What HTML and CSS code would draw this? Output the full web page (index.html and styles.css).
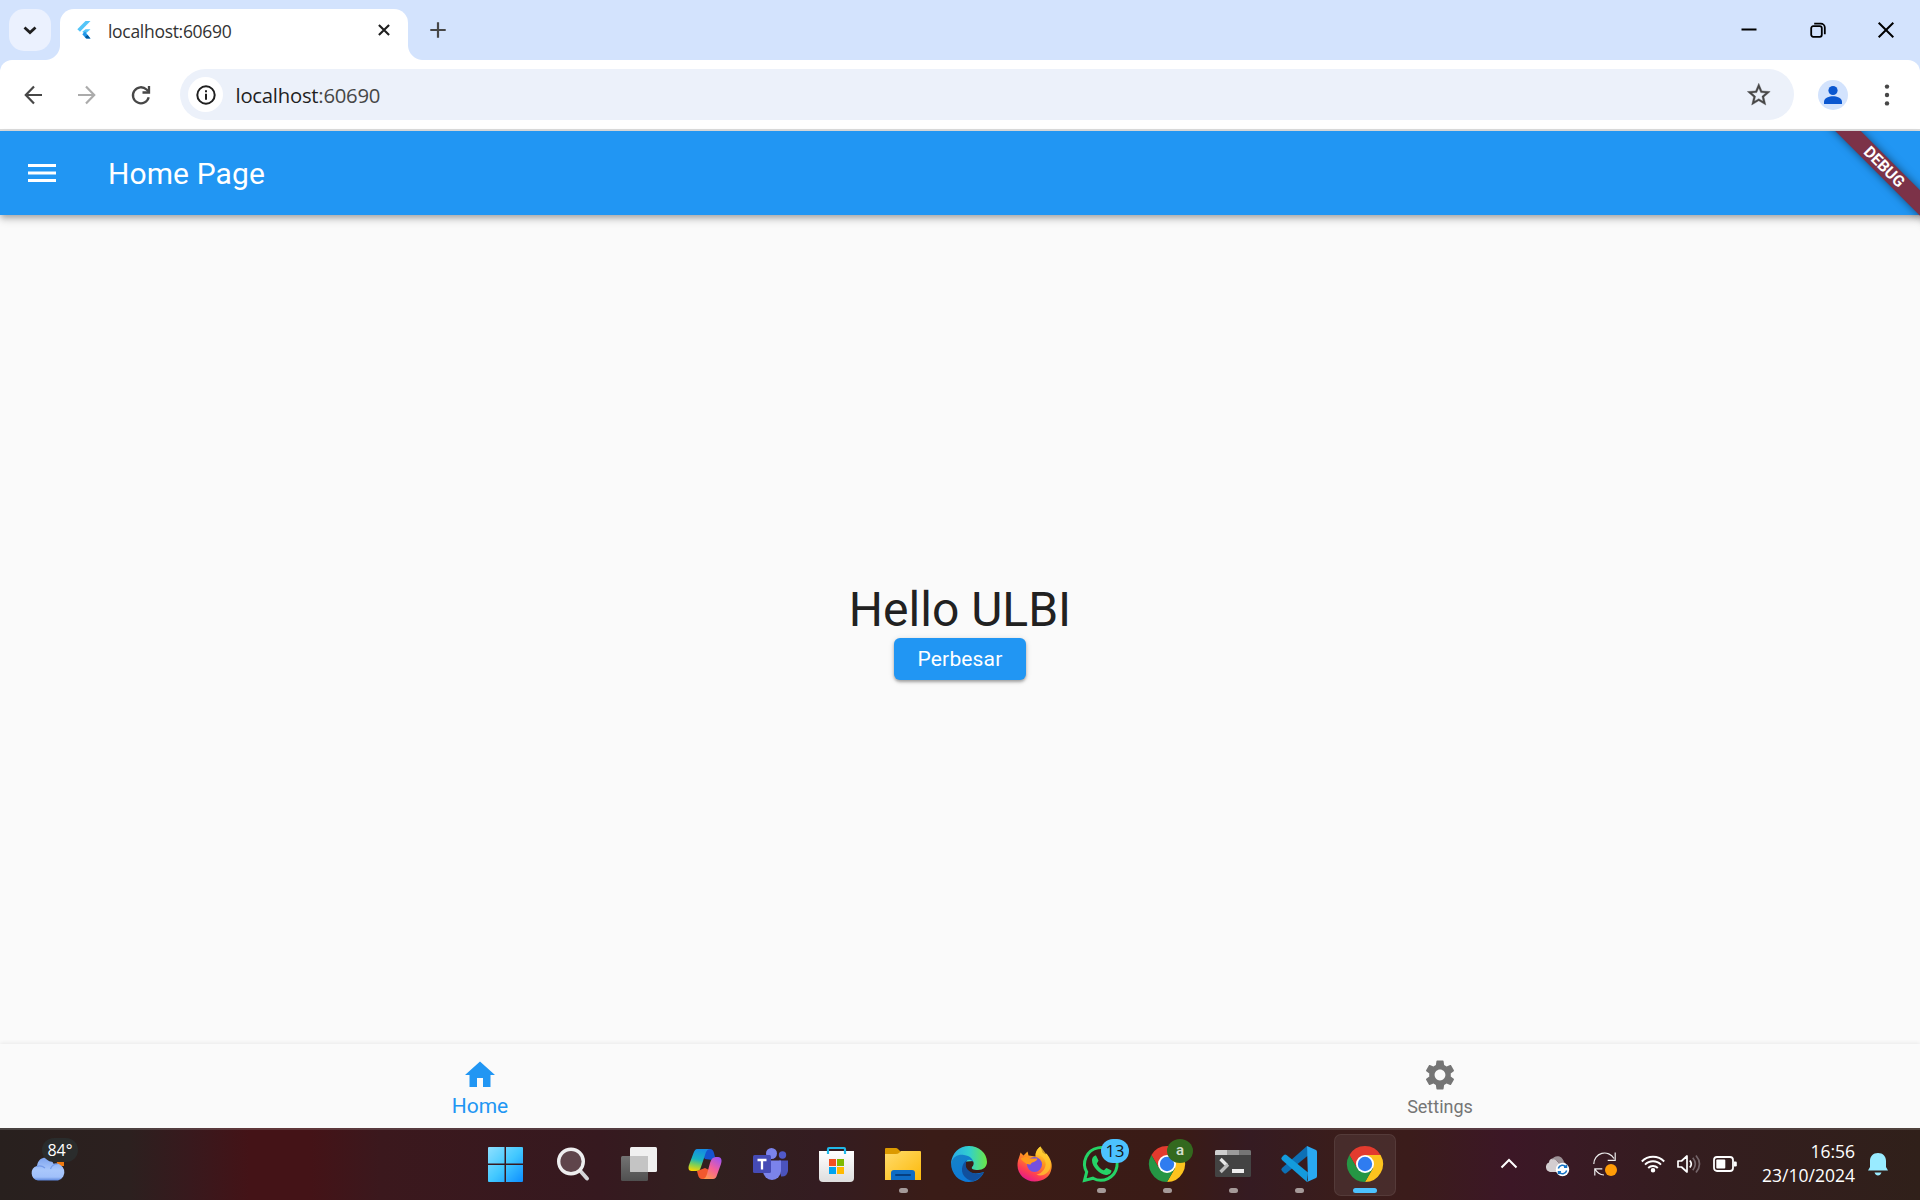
FILE: index.html
```html
<!DOCTYPE html>
<html lang="id">
<head>
<meta charset="utf-8">
<title>localhost:60690</title>
<link rel="stylesheet" href="styles.css">
</head>
<body>
<header class="tabstrip">
  <button class="tab-search"><svg width="42" height="42" viewBox="0 0 42 42"><path d="M15.5 18.5l5.5 5 5.5-5" fill="none" stroke="#1f1f1f" stroke-width="2.8"/></svg></button>
  <div class="tab">
    <svg class="favicon" width="14" height="18" viewBox="0 0 14 18"><path d="M8.5 0H13.5L3 10.8.3 8.2z" fill="#54c5f8"/><path d="M8.5 8.2h5L8 13.3 5.3 10.7z" fill="#54c5f8"/><path d="M5.3 13.3L8 10.6l5.500 7h-4.5z" fill="#2196e8"/><path d="M8 15.9l2.5-1.8 3 3.5H9.5z" fill="#01579b"/></svg>
    <span class="tab-title">localhost:60690</span>
    <svg class="tab-close" width="12" height="12" viewBox="0 0 12 12"><path d="M.9.9l10.2 10.2M11.1.9L.9 11.1" stroke="#1f1f1f" stroke-width="2.1"/></svg>
  </div>
  <svg class="new-tab" width="16" height="16" viewBox="0 0 16 16"><path d="M8 .3v15.4M.3 8h15.4" stroke="#474747" stroke-width="2.2"/></svg>
  <div class="window-controls">
    <svg width="16" height="16" viewBox="0 0 16 16"><path d="M.5 7.500h15" stroke="#000" stroke-width="2"/></svg>
    <svg width="16" height="16" viewBox="0 0 16 16" fill="none" stroke="#000" stroke-width="1.800"><rect x="1.200" y="4.200" width="10.600" height="10.600" rx="2"/><path d="M4.200 1.600h6.600a4 4 0 0 1 4 4v6.600"/></svg>
    <svg width="16" height="16" viewBox="0 0 16 16"><path d="M.7.7l14.6 14.6M15.3.7L.7 15.3" stroke="#000" stroke-width="2"/></svg>
  </div>
</header>
<nav class="toolbar">
  <svg width="54" height="54" viewBox="0 0 54 54" fill="none" stroke="#474747" stroke-width="2.2"><path d="M42 27H26M34 18.6L25.8 27l8.2 8.4"/></svg>
  <svg width="54" height="54" viewBox="0 0 54 54" fill="none" stroke="#ababab" stroke-width="2.2"><path d="M24 27h16M32 18.6L40.2 27 32 35.4"/></svg>
  <svg width="54" height="54" viewBox="0 0 54 54" fill="none" stroke="#474747" stroke-width="2.300"><path d="M40.700 29.200a8 8 0 1 1-2.200-7.700L40.600 23.500"/><path d="M41 18v6.500h-6.500"/></svg>
  <div class="omnibox">
    <span class="site-info"><svg width="20" height="20" viewBox="0 0 20 20"><circle cx="10" cy="10" r="8.700" fill="none" stroke="#1f1f1f" stroke-width="2"/><path d="M10 8.800v6M10 5.200v2" stroke="#1f1f1f" stroke-width="2"/></svg></span>
    <span class="url">localhost<span class="port">:60690</span></span>
    <svg class="star" width="27.500" height="27.500" viewBox="0 0 24 24"><path d="M22 9.24l-7.19-.62L12 2 9.19 8.63 2 9.24l5.46 4.73L5.82 21 12 17.27 18.18 21l-1.63-7.03L22 9.24zM12 15.4l-3.76 2.27 1-4.28-3.32-2.88 4.38-.38L12 6.1l1.71 4.04 4.38.38-3.32 2.88 1 4.28L12 15.4z" fill="#474747" stroke="#474747" stroke-width=".3"/></svg>
  </div>
  <svg class="avatar" width="30" height="30" viewBox="0 0 30 30"><circle cx="15" cy="15" r="15" fill="#d3e3fd"/><circle cx="15" cy="10.500" r="4.600" fill="#0b57d0"/><path d="M6 24v-2.400c0-3.600 5.400-5.400 9-5.400s9 1.800 9 5.400V24z" fill="#0b57d0"/></svg>
  <svg class="kebab" width="6" height="24" viewBox="0 0 6 24" fill="#474747"><circle cx="3" cy="3.600" r="2.200"/><circle cx="3" cy="12" r="2.200"/><circle cx="3" cy="20.400" r="2.200"/></svg>
</nav>
<div class="app">
  <header class="appbar">
    <svg class="menu" width="28" height="18" viewBox="0 0 28 18" fill="#fff"><path d="M0 0h28v3H0zM0 7.5h28v3H0zM0 15h28v3H0z"/></svg>
    <h1>Home Page</h1>
    <div class="debug-corner"><div class="debug-ribbon">DEBUG</div></div>
  </header>
  <main class="content">
    <p class="greeting">Hello ULBI</p>
    <button class="enlarge">Perbesar</button>
  </main>
  <nav class="bottom-nav">
    <a class="nav-item nav-active"><svg width="36" height="36" viewBox="0 0 24 24" fill="currentColor"><path d="M10 20v-6h4v6h5v-8h3L12 3 2 12h3v8z"/></svg><span>Home</span></a>
    <a class="nav-item"><svg width="36" height="36" viewBox="0 0 24 24" fill="currentColor"><path d="M19.14 12.94c.04-.3.06-.61.06-.94 0-.32-.02-.64-.07-.94l2.03-1.58c.18-.14.23-.41.12-.61l-1.92-3.32c-.12-.22-.37-.29-.59-.22l-2.39.96c-.5-.38-1.03-.7-1.62-.94l-.36-2.54c-.04-.24-.24-.41-.48-.41h-3.84c-.24 0-.43.17-.47.41l-.36 2.54c-.59.24-1.13.57-1.62.94l-2.39-.96c-.22-.08-.47 0-.59.22L2.74 8.87c-.12.21-.08.47.12.61l2.03 1.58c-.05.3-.09.63-.09.94s.02.64.07.94l-2.03 1.58c-.18.14-.23.41-.12.61l1.92 3.32c.12.22.37.29.59.22l2.39-.96c.5.38 1.03.7 1.62.94l.36 2.54c.05.24.24.41.48.41h3.84c.24 0 .44-.17.47-.41l.36-2.54c.59-.24 1.13-.56 1.62-.94l2.39.96c.22.08.47 0 .59-.22l1.92-3.32c.12-.22.07-.47-.12-.61l-2.01-1.58zM12 15.6c-1.98 0-3.6-1.62-3.6-3.6s1.62-3.6 3.6-3.6 3.6 1.62 3.6 3.6-1.62 3.6-3.6 3.6z"/></svg><span>Settings</span></a>
  </nav>
</div>
<footer class="taskbar">
  <div class="weather">
    <svg width="36" height="24" viewBox="0 0 36 24"><defs><linearGradient id="cloud" x2="0" y2="1"><stop offset="0" stop-color="#7ea4ee"/><stop offset=".55" stop-color="#a9c7fb"/><stop offset=".85" stop-color="#a0c0fa"/><stop offset="1" stop-color="#5b86dc"/></linearGradient></defs><path d="M26 3h8v6h-6z" fill="#f07a10"/><path d="M8 23.5a7.500 7.500 0 0 1-1-14.600C8 3 11.500 .8 15 .8c4 0 7 2.500 8.500 6A8.600 8.600 0 1 1 28 23.500z" fill="url(#cloud)"/><path d="M6.500 9.500c3-1 6-.5 8.500 1.500M20.500 12c1-3 3.500-5 7-5" fill="none" stroke="#749ae8" stroke-width="1.200"/></svg>
    <span class="temp">84°</span>
  </div>
  <div class="apps">
    <div class="app-cell"><svg viewBox="0 0 36 36"><defs><linearGradient id="win" x1="0" y1="0" x2="36" y2="36" gradientUnits="userSpaceOnUse"><stop offset="0" stop-color="#8fe0ff"/><stop offset=".5" stop-color="#42c8ff"/><stop offset="1" stop-color="#0a8bff"/></linearGradient></defs><path d="M0 1h15.500v16.500H-1V2q0-1 1-1zM17 1h16q1 0 1 1v15.500H17zM-1 19h16.500v17H0q-1 0-1-1zM17 19h17v16q0 1-1 1H17z" fill="url(#win)"/></svg></div>
    <div class="app-cell"><svg viewBox="0 0 36 36"><path d="M24.500 24l7.500 8.500" stroke="#d5d5d8" stroke-width="4" stroke-linecap="round"/><circle cx="16" cy="15.500" r="12.300" fill="#5f454b" stroke="#eeeeef" stroke-width="3.400"/></svg></div>
    <div class="app-cell"><svg viewBox="0 0 36 36"><defs><linearGradient id="tv" x2="0" y2="1"><stop offset="0" stop-color="#737373"/><stop offset="1" stop-color="#505050"/></linearGradient></defs><rect x="0" y="10" width="27" height="25" rx="1.500" fill="url(#tv)"/><rect x="9" y="1" width="27" height="25" rx="1.500" fill="#f0f0f0"/><path d="M9 10h18v16H10.500Q9 26 9 24.500z" fill="#c4c4c4"/></svg></div>
    <div class="app-cell"><svg viewBox="0 0 36 36"><defs><linearGradient id="cp1" x1=".4" x2=".2" y2="1"><stop offset="0" stop-color="#168de2"/><stop offset=".45" stop-color="#18b4c0"/><stop offset=".7" stop-color="#7bcf59"/><stop offset="1" stop-color="#ffd500"/></linearGradient><linearGradient id="cp2" x1=".8" x2=".2" y2="1"><stop offset="0" stop-color="#a253f0"/><stop offset=".5" stop-color="#f5609a"/><stop offset="1" stop-color="#ff9a4a"/></linearGradient></defs><path d="M10 3h13q3 0 4 4l1 4h4l-6 3-8-1z" fill="#1554cf"/><path d="M10 25l8-3 6 3-4 8h-5q-3 0-4-4z" fill="#f2582e"/><path d="M10 3h13c-3 0-4 3-5 6l-4 12c-1 3-2 4-5 4H4.500C1.500 25 1 22 2 19L6.500 7Q8 3 10 3z" fill="url(#cp1)"/><path d="M26 33H15c3 0 4-2 5-5l3-11c1-4 3-6 6-6h2c4 0 4 4 3 7l-4 11q-1 4-4 4z" fill="url(#cp2)"/></svg></div>
    <div class="app-cell"><svg viewBox="0 0 36 36"><circle cx="18.500" cy="7.500" r="5.500" fill="#7b83eb"/><circle cx="29.500" cy="9" r="3.700" fill="#5059c9"/><path d="M26 14.500h9V25q-1 6-7 5.500z" fill="#4b53bc"/><path d="M10 14.500h18V25a9 9 0 0 1-18 0z" fill="#7b83eb"/><rect x="0" y="9" width="18" height="18" rx="1.500" fill="#454bb5"/><path d="M4.500 14h9M9 14v9.500" stroke="#fff" stroke-width="2.300"/></svg></div>
    <div class="app-cell"><svg viewBox="0 0 36 36"><defs><linearGradient id="st" x2="0" y2="1"><stop offset="0" stop-color="#fff"/><stop offset="1" stop-color="#dedede"/></linearGradient></defs><path d="M0 5h35v27q0 4-4 4H4q-4 0-4-4z" fill="url(#st)"/><path d="M9 8V3q0-1 1-1h15q1 0 1 1v5" fill="none" stroke="#20b8e8" stroke-width="2.200"/><path d="M10 13h7v7h-7z" fill="#f25022"/><path d="M18 13h7v7h-7z" fill="#7fba00"/><path d="M10 21h7v7h-7z" fill="#00a4ef"/><path d="M18 21h7v7h-7z" fill="#ffb900"/></svg></div>
    <div class="app-cell running"><svg viewBox="0 0 36 36"><defs><linearGradient id="fo" x2="1" y2="1"><stop offset="0" stop-color="#ffdc6c"/><stop offset="1" stop-color="#fdb90a"/></linearGradient></defs><path d="M0 9V3q0-1 1-1h10q1 0 2 1l3 3v4z" fill="#dc9a00"/><path d="M0 8h11q2 0 3-1l2-2h19q1 0 1 1v28H0z" fill="url(#fo)"/><path d="M6 34V27q0-3 3-3h18q3 0 3 3v7z" fill="#0f6cc4"/><path d="M11 29h14" stroke="#063f80" stroke-width="2" stroke-linecap="round"/></svg></div>
    <div class="app-cell"><svg viewBox="0 0 36 36"><defs><linearGradient id="ed" x2="1"><stop offset="0" stop-color="#2aa9e8"/><stop offset=".5" stop-color="#31cfcf"/><stop offset="1" stop-color="#6be846"/></linearGradient><linearGradient id="ed2" x2=".6" y2="1"><stop offset="0" stop-color="#1683c6"/><stop offset="1" stop-color="#0c78da"/></linearGradient></defs><path d="M0 17C1 7 8 0 18 0s18 7 18 16c0 5-4 8-9 8-5 0-7-1-6-3 2-2 2-4 1-6z" fill="url(#ed)"/><path d="M0 17C2 10 8 8 13 9c6 1 9 4 9 7-2-3-6-3-7 0-2 5 1 10 6 11 4 1 8 0 12-1C30 33 24 36 18 36 8 36 0 28 0 17z" fill="url(#ed2)"/><path d="M16 14c-6 4-7 13-1 18 2 2 5 3 8 3 5-2 8-5 10-9-6 3-12 2-16-2-3-3-3-7-1-10z" fill="#11509d"/></svg></div>
    <div class="app-cell"><svg viewBox="-.5 -.5 36 36"><defs><linearGradient id="ff" x1=".8" x2=".3" y2="1"><stop offset="0" stop-color="#fff44f"/><stop offset=".4" stop-color="#ff9a1c"/><stop offset=".75" stop-color="#ff4150"/><stop offset="1" stop-color="#e3178f"/></linearGradient></defs><path d="M3 6l3 3 4-4 1 4 7 1c0-5 2-8 5-10l2 6 3 2 1-1c4 5 6 10 5 15-1 8-8 13-17 13S0 28 0 19C0 13 2 11 3 6z" fill="url(#ff)"/><circle cx="17" cy="18" r="7.500" fill="#7550df"/><path d="M3 12c4-2 7-2 9 0h8c-1 4-6 3-7 6-3 0-6-1-10-6z" fill="#ff9a1c"/><path d="M18 9c5-1 9 2 10 7s-3 11-9 12c6 3 14-2 14-9 0-5-2-9-4-11l-6-8c-3 2-5 5-5 9z" fill="#ffc92d" opacity=".75"/></svg></div>
    <div class="app-cell running"><svg viewBox="0 0 36 36"><path d="M1.500 34.500l2.200-8.500A16.300 16.300 0 1 1 10 32.200z" fill="none" stroke="#25d366" stroke-width="3"/><path d="M13 9.500l2.500 5c-.3 1.500-2 2.500-1.500 3.500 1.500 3 3.500 5 6.500 6.300 1 .2 2-1.800 3-2.300l5 2.500c0 3-3 4.500-5.500 4.500-6-.5-14-8-14-14.500 0-2.500 1.500-5 4-5z" fill="#25d366"/></svg><span class="badge badge-count">13</span></div>
    <div class="app-cell running"><svg viewBox="0 0 36 36"><path d="M2.400 9A18 18 0 0 1 33.600 9H18l-7.800 13.500z" fill="#e33b2e"/><path d="M33.600 9A18 18 0 0 1 18 36l7.800-13.500L18 9z" fill="#fcc31e"/><path d="M2.400 9A18 18 0 0 0 18 36l7.800-13.500H10.200z" fill="#259644"/><circle cx="18" cy="18" r="9" fill="#fff"/><circle cx="18" cy="18" r="7.200" fill="#2f7cf0"/></svg><span class="badge badge-profile">a</span></div>
    <div class="app-cell running"><svg viewBox="0 0 36 36"><rect x="0" y="4" width="36" height="27" rx="1.500" fill="#434343"/><path d="M1.500 4H12v5H0V5.500Q0 4 1.500 4z" fill="#cfcfcf"/><path d="M12 4h12v5H12z" fill="#9c9c9c"/><path d="M24 4h10.500Q36 4 36 5.500V9H24z" fill="#757575"/><path d="M5.500 13l6.500 6.500" stroke="#e8e8e8" stroke-width="3.400"/><path d="M13 18.500L5.500 26" stroke="#bcbcbc" stroke-width="3.400"/><path d="M17 23h12v4H17z" fill="#eee"/></svg></div>
    <div class="app-cell running"><svg viewBox="0 0 36 36"><path d="M26 0L1 22q-1.500 1.500 0 3l2 2q1 1 2.500 0L27 9.500z" fill="#0d70b5"/><path d="M26 36L1 14q-1.500-1.500 0-3l2-2q1-1 2.500 0L27 26.500z" fill="#139bdd"/><path d="M26 0l9 4q1 .5 1 2v24q0 1.500-1 2l-9 4 1-2z" fill="#29a9f2"/></svg></div>
    <div class="app-cell active"><svg viewBox="0 0 36 36"><path d="M2.400 9A18 18 0 0 1 33.600 9H18l-7.800 13.500z" fill="#e33b2e"/><path d="M33.600 9A18 18 0 0 1 18 36l7.800-13.500L18 9z" fill="#fcc31e"/><path d="M2.400 9A18 18 0 0 0 18 36l7.800-13.500H10.200z" fill="#259644"/><circle cx="18" cy="18" r="9" fill="#fff"/><circle cx="18" cy="18" r="7.200" fill="#2f7cf0"/></svg></div>
  </div>
  <div class="tray">
    <svg width="24" height="24" viewBox="0 0 24 24"><path d="M4.500 15.500L12 8l7.500 7.500" fill="none" stroke="#fff" stroke-width="2"/></svg>
    <svg class="gap-24" width="24" height="24" viewBox="0 0 24 24"><path d="M5 20a5 5 0 0 1-1-9.500C4 6 10 5 12 9l8 9v2z" fill="#d3cdd0"/><path d="M6.500 8C9 3 17 2.500 19 10q2 1 2 4l-6-1-3-4q-3-3-5.500-1z" fill="#9d9297"/><circle cx="17.500" cy="17.500" r="6.700" fill="#fff"/><path d="M13.300 16.500a4.400 4.400 0 0 1 7.800-1.500M21.700 18.500a4.400 4.400 0 0 1-7.800 1.500M21.500 12.800v2.500H19M13.500 22.200v-2.500H16" fill="none" stroke="#1673c5" stroke-width="1.500"/></svg>
    <svg class="gap-24" width="24" height="24" viewBox="0 0 24 24"><path d="M.8 12A10.800 10.800 0 0 1 21 6.500M22.200.5v7.800h-7.500M1.800 23.500v-6.700h7.500M2 17q3 5.500 9 6" fill="none" stroke="#eee" stroke-width="1.200"/><circle cx="18" cy="18" r="6" fill="#ff9c07"/></svg>
    <svg class="gap-24" width="24" height="24" viewBox="0 0 24 24" fill="none" stroke="#fff" stroke-width="1.900"><path d="M.8 9.500a15.600 15.600 0 0 1 22.400 0M4 12.700a11 11 0 0 1 16 0M7.200 16a6.700 6.700 0 0 1 9.600 0"/><circle cx="12" cy="18.200" r="1.300" fill="#fff"/></svg>
    <svg class="gap-12" width="24" height="24" viewBox="0 0 24 24" fill="none" stroke="#fff" stroke-width="1.700"><path d="M1 9h3.500L10 4v16l-5.500-5H1z" stroke-linejoin="round"/><path d="M12.800 8.500q3 3.500 0 7"/><path d="M15.800 5.800q5 6.200 0 12.400M19 3.500q7 8.500 0 17" stroke="#75666a"/></svg>
    <svg class="gap-12" width="24" height="24" viewBox="0 0 24 24"><rect x="1" y="5" width="19" height="14" rx="3" fill="none" stroke="#fff" stroke-width="1.800"/><rect x="3.300" y="7.500" width="9" height="9" rx="1" fill="#fff"/><path d="M21 9.500h1.500q1.300 0 1.300 1.300v2.400q0 1.300-1.300 1.300H21z" fill="#fff"/></svg>
    <div class="clock"><span>16:56</span><span>23/10/2024</span></div>
    <svg class="bell" width="20" height="24" viewBox="0 0 20 24" fill="#99ebff"><path d="M10 1c5 0 8 3.500 8 8v6l2 3.500H0L2 15V9c0-4.500 3-8 8-8zM6.500 20.500h7q-1 3-3.500 3t-3.500-3z"/></svg>
  </div>
</footer>
</body>
</html>
```
FILE: styles.css
```css
* { box-sizing: border-box; }
body {
  margin: 0;
  width: 1920px;
  height: 1200px;
  overflow: hidden;
  display: flex;
  flex-direction: column;
  background: #d3e3fd;
  font-family: "Open Sans", "Noto Sans", sans-serif;
}
svg { display: block; flex: none; overflow: visible; }
button { border: 0; padding: 0; }

/* Browser tab strip */
.tabstrip { height: 60px; flex: none; display: flex; align-items: flex-start; padding: 9px 26px 0 9px; }
.tab-search { width: 42px; height: 42px; border-radius: 15px; background: #ebf1fe; }
.tab {
  position: relative;
  width: 348px;
  height: 51px;
  margin-left: 9px;
  padding: 0 18px 9px 17px;
  border-radius: 14px 14px 0 0;
  background: #fff;
  display: flex;
  align-items: center;
}
.tab::before, .tab::after { content: ""; position: absolute; bottom: 0; width: 15px; height: 15px; }
.tab::before { left: -15px; background: radial-gradient(circle at 0 0, transparent 14.5px, #fff 15.5px); }
.tab::after { right: -15px; background: radial-gradient(circle at 100% 0, transparent 14.5px, #fff 15.5px); }
.tab-title { margin: 2px 0 0 17px; font-size: 17.500px; letter-spacing: -.3px; color: #333; }
.tab-close { margin-left: auto; }
.new-tab { margin: 13px 0 0 22px; }
.window-controls { margin: 12.500px 0 0 auto; display: flex; gap: 52.500px; }

/* Address bar row */
.toolbar {
  height: 71px;
  flex: none;
  display: flex;
  align-items: center;
  padding: 0 30px 0 0;
  background: #fff;
  border-bottom: 2px solid #dcdcdc;
  border-radius: 12px 12px 0 0;
}
.omnibox {
  height: 51px;
  width: 1614px;
  margin-left: 18px;
  padding: 0 22px 0 8px;
  border-radius: 26px;
  background: #ecf1fa;
  display: flex;
  align-items: center;
}
.site-info { width: 35px; height: 35px; border-radius: 50%; background: #fff; display: grid; place-items: center; }
.url { margin-left: 12.500px; font-size: 20.300px; letter-spacing: -.24px; color: #1f1f1f; }
.port { color: #474747; }
.star { margin-left: auto; }
.avatar { margin-left: 24px; }
.kebab { margin-left: 36px; }

/* Flutter application */
.app { height: 997px; flex: none; display: flex; flex-direction: column; background: #fafafa; font-family: Roboto, sans-serif; }
.appbar {
  position: relative;
  height: 84px;
  flex: none;
  display: flex;
  align-items: center;
  padding-left: 28px;
  background: #2196f3;
  color: #fff;
  box-shadow: 0 3px 6px -1px rgba(0,0,0,.25), 0 5px 8px rgba(0,0,0,.14);
}
.appbar h1 { margin: 2px 0 0 52px; font-size: 30px; font-weight: 400; line-height: 36px; letter-spacing: .1px; }
.debug-corner { position: absolute; top: 0; right: 0; width: 120px; height: 100px; overflow: hidden; }
.debug-ribbon {
  position: absolute;
  left: -15.750px;
  top: 26.750px;
  width: 200px;
  height: 18px;
  line-height: 18px;
  text-align: center;
  font-size: 15.800px;
  font-weight: 700;
  background: #7c3248;
  transform: rotate(45deg);
  box-shadow: 0 0 9px rgba(0,0,0,.5);
}
.content { flex: 1; display: flex; flex-direction: column; align-items: center; justify-content: center; padding-top: 2px; }
.greeting { margin: 0; font-size: 48px; line-height: 56px; color: #212121; }
.enlarge {
  width: 132px;
  height: 42px;
  border-radius: 6px;
  background: #2196f3;
  color: #fff;
  font: 400 21px/42px Roboto, sans-serif;
  letter-spacing: .15px;
  box-shadow: 0 2px 3px rgba(0,0,0,.3), 0 1px 6px rgba(0,0,0,.12);
}
.bottom-nav { height: 84px; flex: none; display: flex; background: #fafafa; box-shadow: 0 -1px 4px rgba(0,0,0,.07); }
.nav-item { flex: 1; display: flex; flex-direction: column; align-items: center; padding-top: 13px; color: #757575; font-size: 18px; line-height: 28px; }
.nav-active { color: #2196f3; font-size: 21px; }
.nav-active span { margin-top: -1px; }

/* Windows taskbar */
.taskbar {
  height: 72px;
  flex: none;
  display: flex;
  align-items: flex-start;
  padding-left: 30px;
  color: #fff;
  background:
    linear-gradient(rgba(255,255,255,.15), rgba(255,255,255,.15)) 0 0 / 100% 2px no-repeat,
    linear-gradient(90deg, #28201e 0, #2c201f 130px, #38191d 190px, #441317 250px, #441317 310px, #3b181d 380px, #36191f 600px, #31201f 710px, #341c21 820px, #3a1c17 930px, #3a1b16 1180px, #351b22 1250px, #3a1d1b 1340px, #3b1c1b 1410px, #3c1726 1510px, #391a24 1570px, #341d1f 1690px, #30201a 1920px);
}
.weather { position: relative; width: 54px; height: 72px; padding-top: 29px; }
.temp {
  position: absolute;
  left: 12px;
  top: 10px;
  width: 36px;
  height: 24px;
  border-radius: 12px;
  background: #2a2c2c;
  font-size: 16px;
  line-height: 24px;
  text-align: center;
}
.weather svg { margin-left: -.5px; }
.apps { display: flex; margin-left: 390px; }
.app-cell { position: relative; width: 66px; height: 72px; display: grid; place-items: center; }
.app-cell > svg { width: 36px; height: 36px; position: relative; }
.running::after, .active::after { content: ""; position: absolute; left: 28.500px; bottom: 7px; width: 9px; height: 5px; border-radius: 2.500px; background: #a59a99; }
.active::before { content: ""; position: absolute; left: 2px; top: 6px; width: 60px; height: 60px; border-radius: 7px; background: rgba(255,255,255,.07); border: 1px solid rgba(255,255,255,.07); }
.active::after { left: 21px; width: 24px; background: #4cc2ff; }
.badge { position: absolute; top: 11px; border-radius: 12px; height: 24px; text-align: center; }
.badge-count { left: 33px; width: 28px; background: #4cc2ff; color: #151515; font-size: 16.500px; line-height: 24px; }
.badge-profile { left: 33px; width: 26px; border-radius: 50%; background: #33691e; color: #d3dfcf; font: 600 15px/22px Roboto, sans-serif; }
.tray { display: flex; align-items: center; height: 72px; margin-left: 99px; }
.gap-24 { margin-left: 24px; }
.gap-12 { margin-left: 12px; }
.clock { width: 118px; display: flex; flex-direction: column; align-items: flex-end; font-size: 17.500px; line-height: 24px; padding-bottom: 2px; }
.bell { margin-left: 13px; }
```
